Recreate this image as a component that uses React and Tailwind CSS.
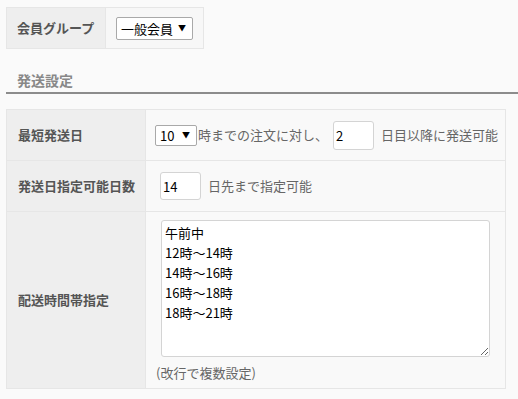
import React from "react";

const font = { fontFamily: '"Noto Sans CJK JP", sans-serif' };

const App = () => {
  const slots = "午前中\n12時〜14時\n14時〜16時\n16時〜18時\n18時〜21時";

  return (
    <div
      className="min-h-screen bg-[#fafafa] pl-[6px] pt-[7px] text-[13px] text-[#555]"
      style={font}
    >
      {/* member group */}
      <div className="flex w-[198px] h-[42px] border border-[#e6e6e6]">
        <div className="w-[99px] bg-[#eeeeee] border-r border-[#e6e6e6] flex items-center pl-[10px] font-bold whitespace-nowrap">
          会員グループ
        </div>
        <div className="flex-1 bg-[#f7f7f7] flex items-center pl-[10px]">
          <div className="w-[77px] h-[23px] border border-[#a9a9a9] rounded-[2px] bg-white flex items-center justify-between pl-[4px] pr-[6px] text-black text-[13px] leading-none whitespace-nowrap">
            <span>一般会員</span>
            <span className="text-[8px]">▼</span>
          </div>
        </div>
      </div>

      {/* heading */}
      <div className="mt-[19px] h-[26px] border-b-2 border-[#8c8c8c] pl-[11px] flex items-center">
        <span className="font-bold text-[14px] text-[#888]">発送設定</span>
      </div>

      {/* settings table */}
      <div className="mt-[15px] mr-[12px] border border-[#e6e6e6]">
        <div className="flex h-[51px] border-b border-[#e6e6e6]">
          <div className="w-[139px] shrink-0 bg-[#eeeeee] border-r border-[#e6e6e6] flex items-center pl-[11px] font-bold">
            最短発送日
          </div>
          <div className="flex-1 bg-[#f9f9f9] flex items-center pl-[9px] text-[#666] whitespace-nowrap">
            <div className="w-[42px] h-[21px] border border-[#a9a9a9] rounded-[2px] bg-white flex items-center justify-between pl-[4px] pr-[6px] text-black text-[13px] leading-none">
              <span>10</span>
              <span className="text-[8px]">▼</span>
            </div>
            <span className="ml-[1px]">時までの注文に対し、</span>
            <input
              defaultValue="2"
              className="ml-[5px] mr-[7px] w-[41px] h-[29px] border border-[#d4d4d4] rounded-[3px] bg-white px-[2px] text-black text-[13px] outline-none"
            />
            <span>日目以降に発送可能</span>
          </div>
        </div>

        <div className="flex h-[51px] border-b border-[#e6e6e6]">
          <div className="w-[139px] shrink-0 bg-[#eeeeee] border-r border-[#e6e6e6] flex items-center pl-[11px] font-bold">
            発送日指定可能日数
          </div>
          <div className="flex-1 bg-[#f9f9f9] flex items-center pl-[14px] text-[#666]">
            <input
              defaultValue="14"
              className="w-[41px] h-[28px] border border-[#d4d4d4] rounded-[3px] bg-white px-[2px] text-black text-[13px] outline-none"
            />
            <span className="ml-[7px]">日先まで指定可能</span>
          </div>
        </div>

        <div className="flex h-[176px]">
          <div className="w-[139px] shrink-0 bg-[#eeeeee] border-r border-[#e6e6e6] flex items-center pl-[11px] font-bold">
            配送時間帯指定
          </div>
          <div className="flex-1 bg-[#f9f9f9] pl-[10px] pt-[8px] text-[#666]">
            <textarea
              defaultValue={slots}
              className="block ml-[5px] w-[329px] h-[137px] border border-[#d4d4d4] rounded-[3px] bg-white px-[3px] py-[2px] text-black text-[13px] leading-[20px] outline-none"
              style={font}
            />
            <div className="mt-[6px]">(改行で複数設定)</div>
          </div>
        </div>
      </div>
    </div>
  );
};

export default App;
